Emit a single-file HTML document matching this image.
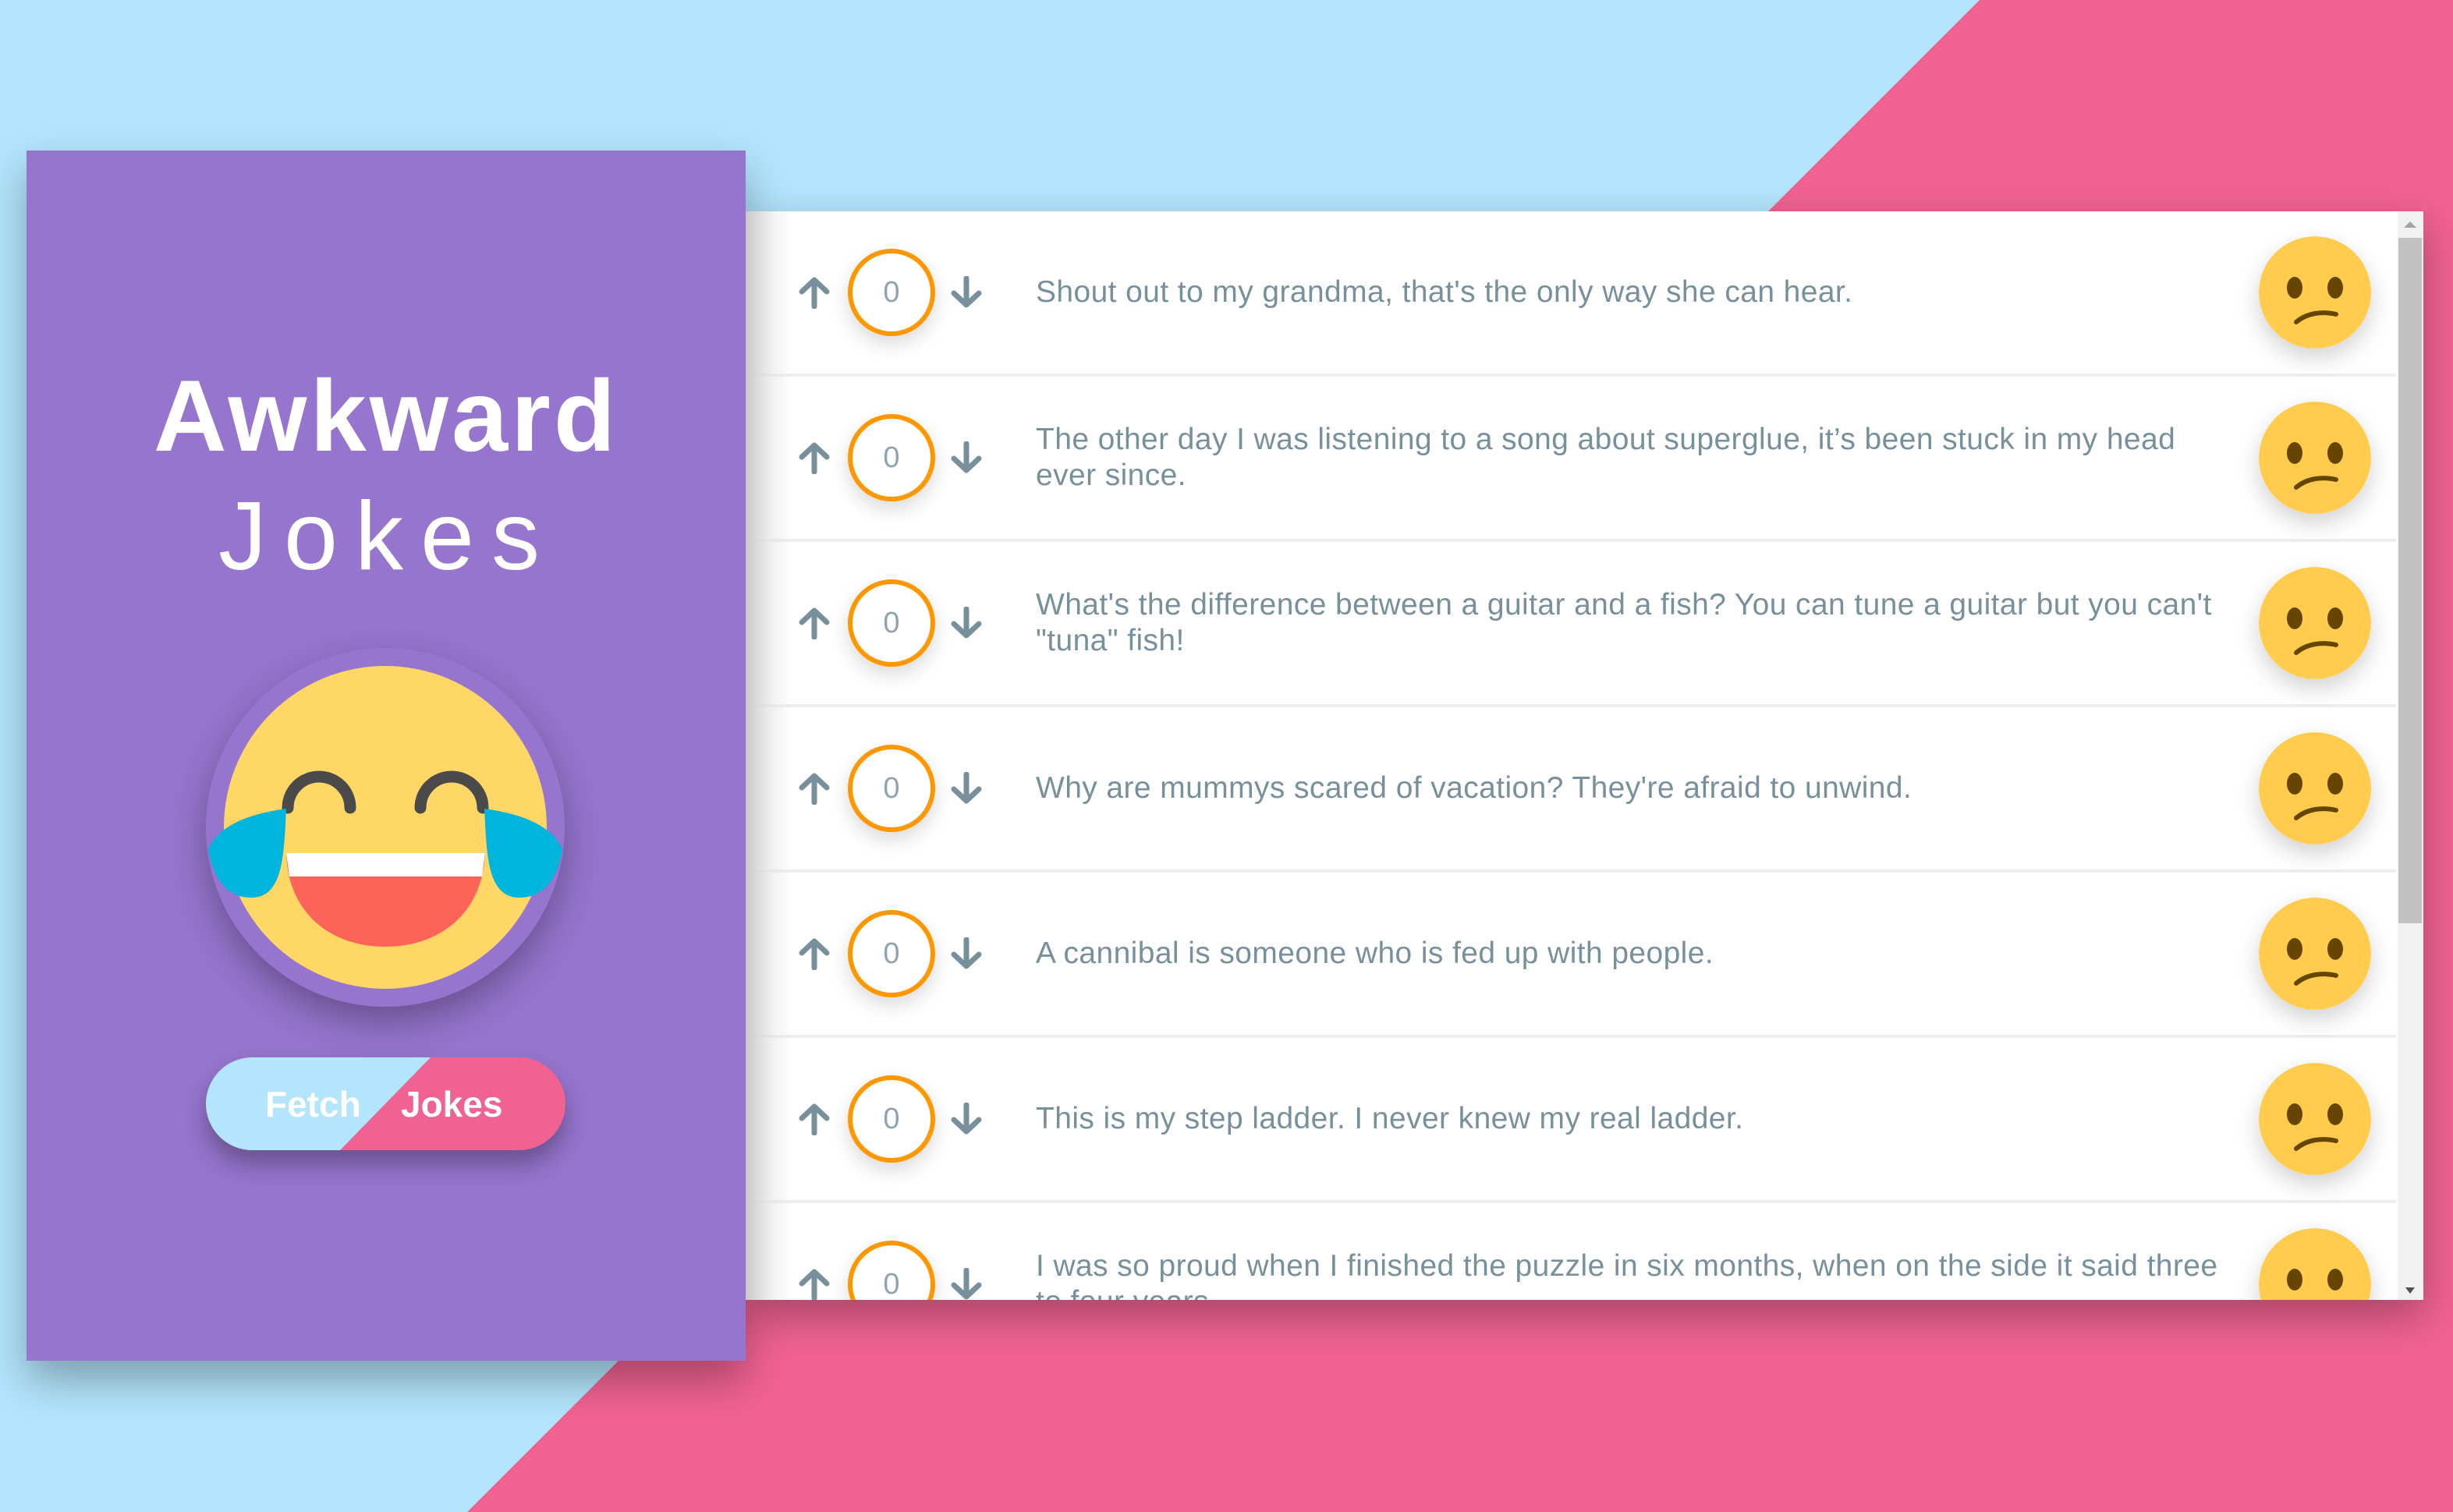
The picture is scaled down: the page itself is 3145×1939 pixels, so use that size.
<!DOCTYPE html>
<html><head><meta charset="utf-8"><style>
*{margin:0;padding:0;box-sizing:border-box}
html,body{width:3145px;height:1939px;overflow:hidden;background:#b3e5fc;font-family:"Liberation Sans",sans-serif}
#bg{position:absolute;left:0;top:0}
#side{position:absolute;left:34px;top:193px;width:922px;height:1552px;background:#9575cd;box-shadow:0 25px 50px rgba(0,0,0,.3);z-index:2}
#aw{position:absolute;left:0;width:922px;top:265px;text-align:center;font-weight:bold;font-size:130px;color:#fff;line-height:150px;letter-spacing:4px}
#jk{position:absolute;left:2px;width:922px;top:420px;text-align:center;font-size:124px;color:#fff;line-height:150px;letter-spacing:22px;font-weight:normal}
#face{position:absolute;left:230px;top:638px;width:460px;height:460px;border-radius:50%;box-shadow:0 20px 45px rgba(0,0,0,.3)}
#btn{position:absolute;left:230px;top:1163px;width:461px;height:119px;border-radius:60px;overflow:hidden;box-shadow:0 18px 30px rgba(0,0,0,.3);background:#f06292}
#btn svg{position:absolute;left:0;top:0}
#btn span{position:absolute;top:30px;font-weight:bold;font-size:46px;color:#fff;line-height:60px}
#panel{position:absolute;left:956px;top:271px;width:2151px;height:1396px;background:#fff;box-shadow:0 20px 50px rgba(0,0,0,.3);overflow:hidden;z-index:1}
.row{position:absolute;left:0;width:2116px;height:208px;border-bottom:4px solid #eee;box-sizing:content-box;background:linear-gradient(90deg,#ececec,#fff 60px)}
.up,.dn{position:absolute;top:83px;width:42px;height:42px}
.up{left:67px}.dn{left:262px}
.circ{position:absolute;left:131px;top:48px;width:112px;height:112px;border:6px solid #ff9800;border-radius:50%;background:#fff;box-shadow:0 10px 25px rgba(0,0,0,.15);text-align:center;line-height:100px;font-size:38px;color:#90a4ae}
.txt{position:absolute;left:372px;width:1545px;top:0;height:208px;display:flex;align-items:center;font-size:39px;letter-spacing:0.4px;line-height:46px;color:#78909c}
.emo{position:absolute;left:1940px;top:32px;width:144px;height:144px;border-radius:50%;box-shadow:0 12px 30px rgba(0,0,0,.18)}
#sb{position:absolute;left:2118px;top:0;width:33px;height:1396px;background:#f1f1f1}
#th{position:absolute;left:2119px;top:34px;width:30px;height:879px;background:#c1c1c1}
</style></head><body>
<svg id="bg" width="3145" height="1939"><polygon points="2538,0 3145,0 3145,1939 599,1939" fill="#f06292"/></svg>
<div id="side">
<div id="aw">Awkward</div>
<div id="jk">Jokes</div>
<div id="face"><svg width="460" height="460" viewBox="0 0 460 460">
<circle cx="230" cy="230" r="230" fill="#9575cd"/>
<circle cx="230" cy="230" r="207" fill="#ffd766"/>
<path d="M105,205 A40,40 0 0 1 185,205" stroke="#4a4a4a" stroke-width="15" fill="none" stroke-linecap="round"/>
<path d="M275,205 A40,40 0 0 1 355,205" stroke="#4a4a4a" stroke-width="15" fill="none" stroke-linecap="round"/>
<path d="M103,263 L358,263 C355,340 300,383 230,383 C160,383 105,340 103,263 Z" fill="#fc6459"/>
<path d="M103,263 L358,263 L354,293 L107,293 Z" fill="#fff"/>
<path d="M103,206 C60,212 18,225 3,258 C10,300 30,322 62,320 C98,316 100,270 103,206 Z" fill="#00b5dc"/>
<path d="M357,206 C400,212 442,225 457,258 C450,300 430,322 398,320 C362,316 360,270 357,206 Z" fill="#00b5dc"/>
</svg></div>
<div id="btn"><svg width="461" height="119"><polygon points="0,0 288,0 172,119 0,119" fill="#b3e5fc"/></svg><span style="left:76px">Fetch</span><span style="left:250px">Jokes</span></div>
</div>
<div id="panel">
<div id="rows"></div>
<div id="sb"></div><div id="th"></div>
<svg style="position:absolute;left:2126px;top:12px" width="16" height="10"><polygon points="0,9 8,1 16,9" fill="#a3a3a3"/></svg>
<svg style="position:absolute;left:2128px;top:1380px" width="12" height="8"><polygon points="0,0 12,0 6,8" fill="#505050"/></svg>
</div>
<script>
var J=["Shout out to my grandma, that's the only way she can hear.",
"The other day I was listening to a song about superglue, it’s been stuck in my head ever since.",
"What's the difference between a guitar and a fish? You can tune a guitar but you can't \"tuna\" fish!",
"Why are mummys scared of vacation? They're afraid to unwind.",
"A cannibal is someone who is fed up with people.",
"This is my step ladder. I never knew my real ladder.",
"I was so proud when I finished the puzzle in six months, when on the side it said three to four years."];
var up='<svg class="up" viewBox="0 0 42 42"><path d="M21,39 V5 M5,20 L21,5 L37,20" stroke="#78909c" stroke-width="7" fill="none" stroke-linecap="round" stroke-linejoin="round"/></svg>';
var dn='<svg class="dn" viewBox="0 0 42 42"><path d="M21,3 V37 M5,22 L21,37 L37,22" stroke="#78909c" stroke-width="7" fill="none" stroke-linecap="round" stroke-linejoin="round"/></svg>';
var em='<svg class="emo" viewBox="0 0 144 144"><circle cx="72" cy="72" r="72" fill="#ffcc4d"/><ellipse cx="46" cy="66" rx="10" ry="14" fill="#664500"/><ellipse cx="98" cy="66" rx="10" ry="14" fill="#664500"/><path d="M48,110 C62,98 82,96 99,100" stroke="#664500" stroke-width="6" fill="none" stroke-linecap="round"/></svg>';
var h="";
for(var i=0;i<7;i++){h+='<div class="row" style="top:'+(i*212)+'px">'+up+'<div class="circ">0</div>'+dn+'<div class="txt"><div>'+J[i]+'</div></div>'+em+'</div>';}
document.getElementById("rows").innerHTML=h;
</script>
</body></html>
